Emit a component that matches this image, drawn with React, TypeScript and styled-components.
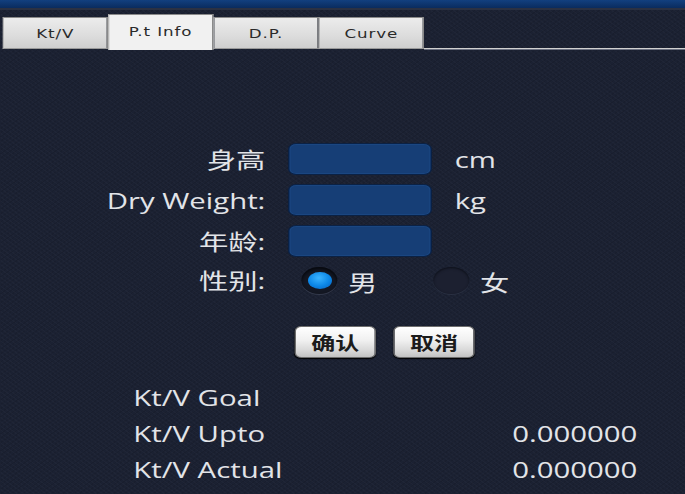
import React from 'react'
import styled, { createGlobalStyle } from 'styled-components'

const GlobalStyle = createGlobalStyle`
  html, body {
    margin: 0;
    padding: 0;
    background: #1b2131;
    overflow: hidden;
  }
`

// the device screen is shown stretched sideways, so the panel is laid out
// at its native width and widened by 4/3
const Screen = styled.div`
  width: 514px;
  height: 494px;
  transform: scaleX(1.3333);
  transform-origin: left top;
  background-color: #1b2132;
  background-image:
    repeating-linear-gradient(45deg, rgba(255, 255, 255, 0.018) 0 1px, transparent 1px 3px),
    repeating-linear-gradient(-45deg, rgba(0, 0, 0, 0.08) 0 1px, transparent 1px 3px);
  font-family: 'Open Sans', 'Noto Sans CJK SC', sans-serif;
  color: #e2e4e8;
  display: flex;
  flex-direction: column;
`

const TopBar = styled.div`
  height: 8px;
  background: linear-gradient(#12407f, #0a2c5e);
  border-bottom: 2px solid #2b3142;
`

const TabBar = styled.div`
  display: flex;
  align-items: flex-end;
  margin-top: 3px;
  padding-left: 2px;
  height: 36px;
`

const Tab = styled.div<{ $active?: boolean }>`
  width: 79px;
  height: ${(p) => (p.$active ? '36px' : '32px')};
  box-sizing: border-box;
  display: flex;
  align-items: center;
  justify-content: center;
  padding-bottom: ${(p) => (p.$active ? '3px' : '0')};
  background: ${(p) =>
    p.$active ? '#f1f1f1' : 'linear-gradient(#ececec, #dcdcdc 60%, #cfcfcf)'};
  border: 1px solid #8a8a8a;
  border-left-color: #b8b8b8;
  border-bottom: ${(p) => (p.$active ? 'none' : '1px solid #9a9a9a')};
  font-family: 'DejaVu Sans', sans-serif;
  font-size: 12.5px;
  letter-spacing: 0.7px;
  color: #2a2a2a;
  margin-bottom: ${(p) => (p.$active ? '-1px' : '0')};
`

const TabFill = styled.div`
  flex: 1;
  height: 1px;
  background: #d0d0d0;
  box-shadow: 0 1px 0 #6b7080;
`

const Form = styled.div`
  margin-top: 94px;
  display: grid;
  grid-template-columns: 199px 108px auto;
  column-gap: 17px;
  row-gap: 9px;
  align-items: center;
`

const Label = styled.div<{ $tight?: boolean }>`
  text-align: right;
  font-size: 22px;
  line-height: ${(p) => (p.$tight ? '27px' : '32px')};
  margin-top: ${(p) => (p.$tight ? '1px' : '0')};
  white-space: nowrap;
`

const Field = styled.div`
  height: 32px;
  box-sizing: border-box;
  border-radius: 6px;
  background: #163e76;
  border: 1px solid #0b2144;
  box-shadow: inset 0 0 0 1px #1a4681;
`

const Unit = styled.div`
  font-size: 22px;
  line-height: 32px;
`

const RadioRow = styled.div`
  grid-column: 2 / 4;
  display: flex;
  padding-left: 10px;
  margin-top: 1px;
`

const RadioOption = styled.div`
  width: 99px;
  height: 27px;
  display: flex;
  align-items: center;
  gap: 8px;
  font-size: 22px;
`

const RadioDot = styled.div<{ $on?: boolean }>`
  width: 27px;
  height: 27px;
  border-radius: 50%;
  display: flex;
  align-items: center;
  justify-content: center;
  background: ${(p) => (p.$on ? '#141824' : '#1c2030')};
  box-shadow: ${(p) =>
    p.$on
      ? 'inset 0 2px 3px #05070c, 0 1px 0 #343a4c'
      : 'inset 0 1px 2px #0c0f18, 0 1px 0 #2a3042'};

  &::after {
    content: '';
    display: ${(p) => (p.$on ? 'block' : 'none')};
    width: 18px;
    height: 17px;
    border-radius: 50%;
    background: radial-gradient(circle at 45% 35%, #3bb4ff, #0b86e6 55%, #0a5cb4);
  }
`

const Actions = styled.div`
  display: flex;
  gap: 13px;
  margin: 32px 0 0 221px;
`

const Button = styled.div`
  width: 61px;
  height: 32px;
  box-sizing: border-box;
  display: flex;
  align-items: center;
  justify-content: center;
  border-radius: 5px;
  border: 1px solid #6e6e6e;
  background: linear-gradient(#ffffff, #f0f0f0 45%, #d6d6d6 80%, #c2c2c2);
  box-shadow: 0 1px 1px #000;
  font-family: 'Noto Sans CJK SC', sans-serif;
  font-weight: 700;
  font-size: 18px;
  color: #1b1b1b;
`

const Results = styled.div`
  margin-top: 21px;
  padding: 0 36px 0 100px;
`

const ResultRow = styled.div`
  display: flex;
  justify-content: space-between;
  font-size: 22px;
  line-height: 36px;
  height: 36px;
`

const results = [
  { name: 'Kt/V Goal', value: '' },
  { name: 'Kt/V Upto', value: '0.000000' },
  { name: 'Kt/V Actual', value: '0.000000' },
]

export default function App() {
  return (
    <>
      <GlobalStyle />
      <Screen>
        <TopBar />
        <TabBar>
          <Tab>Kt/V</Tab>
          <Tab $active>P.t Info</Tab>
          <Tab>D.P.</Tab>
          <Tab>Curve</Tab>
          <TabFill />
        </TabBar>

        <Form>
          <Label>身高</Label>
          <Field />
          <Unit>cm</Unit>

          <Label>Dry Weight:</Label>
          <Field />
          <Unit>kg</Unit>

          <Label>年龄:</Label>
          <Field />
          <div />

          <Label $tight>性别:</Label>
          <RadioRow>
            <RadioOption>
              <RadioDot $on />
              男
            </RadioOption>
            <RadioOption>
              <RadioDot />
              女
            </RadioOption>
          </RadioRow>
        </Form>

        <Actions>
          <Button>确认</Button>
          <Button>取消</Button>
        </Actions>

        <Results>
          {results.map((r) => (
            <ResultRow key={r.name}>
              <span>{r.name}</span>
              <span>{r.value}</span>
            </ResultRow>
          ))}
        </Results>
      </Screen>
    </>
  )
}
